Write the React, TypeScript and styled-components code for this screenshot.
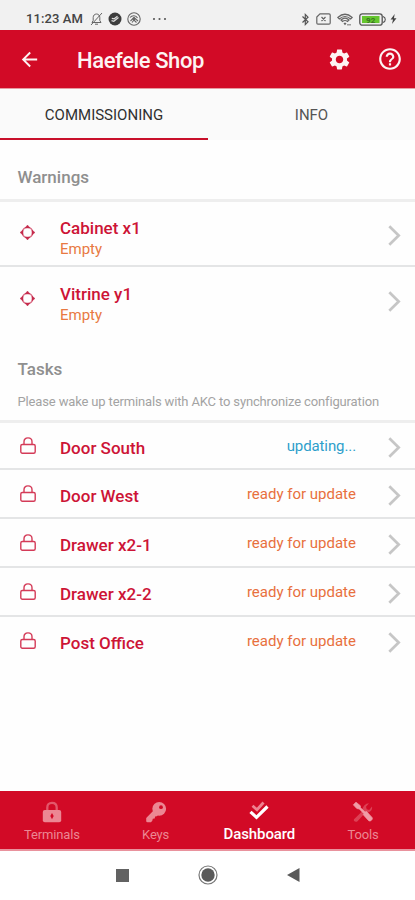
import React from "react";
import styled, { createGlobalStyle } from "styled-components";
import { MdArrowBack, MdSettings, MdHelpOutline } from "react-icons/md";

const RED = "#d20a26";
const PINK = "#ec8793";

const GlobalStyle = createGlobalStyle`
  * { box-sizing: border-box; }
  body { margin: 0; background: #fff; font-family: Roboto, sans-serif; }
  svg { display: block; flex: none; }
`;

const Screen = styled.div`
  width: 415px;
  height: 900px;
  display: flex;
  flex-direction: column;
  background: #fefefe;
  overflow: hidden;
`;

const StatusBar = styled.div`
  height: 30px;
  flex: none;
  display: flex;
  align-items: center;
  padding: 8px 18px 0 26px;
  background: #f1f1f1;
  color: #444;
`;

const Clock = styled.span`
  width: 64px;
  font-size: 13px;
  font-weight: 500;
  line-height: 16px;
  letter-spacing: 0.1px;
  white-space: nowrap;
`;

const StatusGroup = styled.div<{ $gap: number; $end?: boolean }>`
  display: flex;
  align-items: center;
  gap: ${(p) => p.$gap}px;
  margin-left: ${(p) => (p.$end ? "auto" : "0")};
`;

const DotsSlot = styled.div`
  margin-left: 6px;
`;

const BoltSlot = styled.div`
  margin-left: -2px;
`;

const AppBar = styled.header`
  height: 59px;
  flex: none;
  display: flex;
  align-items: center;
  padding: 0 12px 0 18px;
  background: ${RED};
  color: #fdf3f3;
  border-bottom: 1px solid #e79aa2;
`;

const Title = styled.h1`
  flex: 1;
  margin: 3px 0 0 36px;
  font-size: 22px;
  font-weight: 500;
  line-height: 28px;
  letter-spacing: -0.4px;
`;

const Actions = styled.div`
  display: flex;
  align-items: center;
  gap: 25px;
`;

const Tabs = styled.div`
  height: 51px;
  flex: none;
  display: flex;
  background: #fafafa;
`;

const Tab = styled.div<{ $active?: boolean }>`
  width: ${(p) => (p.$active ? 208 : 207)}px;
  height: 51px;
  padding-top: 16px;
  text-align: center;
  font-size: 15px;
  line-height: 20px;
  font-weight: 400;
  color: ${(p) => (p.$active ? "#303030" : "#555")};
  border-bottom: 2px solid ${(p) => (p.$active ? "#c8102a" : "#fafafa")};
`;

const Content = styled.main`
  flex: 1;
  min-height: 0;
`;

const SectionHead = styled.div<{ $height: number; $top: number }>`
  height: ${(p) => p.$height}px;
  padding: ${(p) => p.$top}px 18px 0 17.5px;
  border-bottom: 3px solid #eee;
`;

const SectionTitle = styled.h2`
  margin: 0;
  font-size: 17px;
  line-height: 20px;
  font-weight: 500;
  color: #8f8f8f;
`;

const SectionHint = styled.p`
  margin: 14px 0 0;
  font-size: 13px;
  line-height: 18px;
  letter-spacing: -0.145px;
  color: #a3a3a3;
  white-space: nowrap;
`;

const Row = styled.div<{ $height: number; $last?: boolean }>`
  height: ${(p) => p.$height}px;
  display: flex;
  align-items: center;
  padding: 0 14px 0 20px;
  border-bottom: 2px solid ${(p) => (p.$last ? "transparent" : "#e4e5e6")};
`;

const RowIcon = styled.div<{ $lift: number }>`
  width: 40px;
  padding-bottom: ${(p) => p.$lift}px;
`;

const RowText = styled.div<{ $top: number }>`
  flex: 1;
  padding-top: ${(p) => p.$top}px;
`;

const RowName = styled.div`
  font-size: 17px;
  line-height: 22px;
  font-weight: 500;
  color: #cd1436;
`;

const RowNote = styled.div`
  font-size: 15px;
  line-height: 21px;
  color: #e87942;
`;

const RowStatus = styled.div<{ $busy?: boolean }>`
  margin-right: 32px;
  padding-top: 1px;
  font-size: 15px;
  line-height: 20px;
  letter-spacing: ${(p) => (p.$busy ? "-0.1px" : "0")};
  color: ${(p) => (p.$busy ? "#2e9fcb" : "#e8703d")};
`;

const ChevronSlot = styled.div`
  padding-top: 3px;
`;

const BottomNav = styled.nav`
  height: 60px;
  flex: none;
  display: flex;
  background: ${RED};
  border-bottom: 2px solid #e9929d;
`;

const NavItem = styled.div<{ $active?: boolean }>`
  flex: 1;
  display: flex;
  flex-direction: column;
  align-items: center;
  padding-top: 10px;
  gap: ${(p) => (p.$active ? 1 : 2)}px;
  color: ${(p) => (p.$active ? "#fff" : PINK)};
  font-size: ${(p) => (p.$active ? 15 : 13)}px;
  font-weight: ${(p) => (p.$active ? 500 : 400)};
  letter-spacing: ${(p) => (p.$active ? "-0.1px" : "-0.15px")};
  line-height: 20px;
`;

const SystemNav = styled.div`
  height: 49px;
  flex: none;
  display: flex;
  align-items: center;
  justify-content: center;
  gap: 69px;
  padding-bottom: 1px;
  background: #fff;
`;

const BellOff = () => (
  <svg width="13" height="14" viewBox="0 0 13 14" fill="none" stroke="#666" strokeWidth="1">
    <path d="M2 10.5h9L9.8 8.5V5.5C9.8 3.5 8.5 2 6.5 2S3.2 3.5 3.2 5.5v3zM5 12.2h3M1 13L12 1" />
  </svg>
);

const CheckBadge = () => (
  <svg width="14" height="14" viewBox="0 0 14 14">
    <circle cx="7" cy="7" r="6.5" fill="#3d3d3d" />
    <path d="M3.5 8.7l2.300.6 4.700-3.800M3.800 6.300l2.400.5L9.500 4.200" fill="none" stroke="#ddd" strokeWidth="1.200" />
  </svg>
);

const AppBadge = () => (
  <svg width="14" height="14" viewBox="0 0 14 14" fill="none" stroke="#666" strokeWidth="1.1">
    <circle cx="7" cy="7" r="6.2" />
    <path d="M3 5.5C5 3 9 3 10.5 6M3.5 9L7 5.5l4 3.500M5 10.5L7 8l2.5 2.500" />
    <circle cx="7" cy="6.8" r="1" fill="#666" />
  </svg>
);

const Dots = () => (
  <svg width="15" height="4" viewBox="0 0 15 4" fill="#555">
    <circle cx="2" cy="2" r="1.05" />
    <circle cx="7.5" cy="2" r="1.05" />
    <circle cx="13" cy="2" r="1.05" />
  </svg>
);

const Bluetooth = () => (
  <svg width="9" height="13" viewBox="0 0 9 13" fill="none" stroke="#555" strokeWidth="1.2">
    <path d="M1.5 3.5L7 8.8l-2.700 2.700v-10L7 4.200 1.500 9.500" />
  </svg>
);

const SimOff = () => (
  <svg width="15" height="12" viewBox="0 0 15 12" fill="none" stroke="#666" strokeWidth="1.2">
    <path d="M4 .8h9q1.200 0 1.200 1.200v8q0 1.200-1.200 1.200H2Q.8 11.200.8 10V4zM5.500 4l4 4M9.500 4l-4 4" />
  </svg>
);

const Wifi = () => (
  <svg width="16" height="13" viewBox="0 0 16 13" fill="none" stroke="#666" strokeWidth="1.2">
    <path d="M.8 4.500Q8-2 15.200 4.500L13.700 6Q8 1 2.300 6zM4 7Q8 3.300 12 7L10.500 8.500Q8 6.500 5.500 8.500z" />
    <path d="M7 10l1 1.200L9 10M11 11v1.500M13 11v1.500" />
  </svg>
);

const Battery = () => (
  <svg width="27" height="13" viewBox="0 0 27 13">
    <rect x=".8" y=".8" width="22.4" height="11.4" rx="2.5" fill="#eee" stroke="#555" strokeWidth="1.3" />
    <path d="M24 3.500q2.300.8 2.300 3t-2.300 3" fill="none" stroke="#555" strokeWidth="1.1" />
    <rect x="3" y="3" width="17.5" height="7" fill="#65c62e" />
    <text x="11.7" y="9.5" fontFamily="Roboto" fontSize="8" fontWeight="700" textAnchor="middle" fill="#397620">
      92
    </text>
  </svg>
);

const Bolt = () => (
  <svg width="7" height="10" viewBox="0 0 7 11" fill="#444">
    <path d="M4.800 0L.3 6H3L1.800 11 6.800 4.600H4z" />
  </svg>
);

const Target = () => (
  <svg width="15" height="15" viewBox="0 0 15 15">
    <circle cx="7.5" cy="7.5" r="5.2" fill="none" stroke="#dc7189" strokeWidth="1.5" />
    <path
      d="M7.500 0L10 3H5zM7.500 15L10 12H5zM0 7.500L3 5v5zM15 7.500L12 5v5z"
      fill="#c52a4b"
      stroke="#c52a4b"
      strokeWidth=".4"
    />
  </svg>
);

const Padlock = () => (
  <svg width="16" height="17" viewBox="0 0 16 17" fill="none" stroke="#d43b58" strokeWidth="1.4">
    <rect x=".8" y="7.5" width="14.4" height="8.7" rx="1.5" />
    <path d="M4 7.500V4.800C4 2.300 5.500.9 8 .9s4 1.400 4 3.900v2.700" />
  </svg>
);

const Chevron = () => (
  <ChevronSlot>
    <svg width="13" height="21" viewBox="0 0 13 21" fill="none" stroke="#c6c6c6" strokeWidth="2.7">
      <path d="M1.300 1.300L10.700 10.500 1.300 19.700" />
    </svg>
  </ChevronSlot>
);

const LockSolid = () => (
  <svg width="20" height="22" viewBox="0 0 20 22">
    <path d="M5.300 10V6.500C5.300 3.500 7 1.800 10 1.800s4.700 1.700 4.700 4.700V10" fill="none" stroke="#e3576a" strokeWidth="2.3" />
    <rect x=".8" y="9" width="18.4" height="12.3" rx="2" fill={PINK} />
    <path d="M10 12l1.700 3-1.700 3.300L8.300 15z" fill={RED} />
  </svg>
);

const KeySolid = () => (
  <svg width="22" height="22" viewBox="0 0 22 22">
    <circle cx="14.2" cy="7.8" r="6.9" fill={PINK} />
    <path d="M9.500 8.500l4.500 4.500-2.200 2.200-1.700.3-.4 1.900-1.900.4-.5 1.900-1.300 1.600H2.500q-1.300 0-1.300-1.300v-3z" fill={PINK} />
    <circle cx="16" cy="6.2" r="1.9" fill={RED} />
  </svg>
);

const DoubleCheck = () => (
  <svg width="20" height="22" viewBox="0 0 20 22" fill="none">
    <path d="M3.500 4.700l4.500 4L14.500 1.500" stroke="#ee8290" strokeWidth="2.8" />
    <path d="M1.500 10.800l6 5.600L18.500 5.500" stroke="#fff" strokeWidth="3.2" />
  </svg>
);

const Tools = () => (
  <svg width="22" height="22" viewBox="0 0 22 22">
    <path
      d="M2 18.300l8-7.800c-.5-2 1-5.500 4.500-7.700l2.500-.5-3 3.500.7 2.500 2.500.7L20 5.500c.8 4-2.500 6.500-6.500 6l-8 8.700c-1.800 1.400-4.500-.3-3.500-1.900z"
      fill="#dd4155"
    />
    <path
      d="M1.300 3.800L4 1.200l4.300 3.500.2 2L13 11l1.500-.5 5.500 5.900c1.300 1.800-1.500 4.500-3.300 3.300l-5.400-5.900.5-1.300L7.300 8l-2.500-.5z"
      fill="#f09ca6"
      stroke="#f09ca6"
      strokeWidth=".7"
    />
  </svg>
);

const Recents = () => (
  <svg width="13" height="13" viewBox="0 0 13 13">
    <rect width="13" height="13" fill="#626262" />
  </svg>
);

const Home = () => (
  <svg width="20" height="20" viewBox="0 0 20 20">
    <circle cx="10" cy="10" r="9" fill="none" stroke="#777" strokeWidth="1.2" />
    <circle cx="10" cy="10" r="6.7" fill="#595959" />
  </svg>
);

const Back = () => (
  <svg width="13" height="14" viewBox="0 0 13 14">
    <path d="M0 7L12.500 0v14z" fill="#595959" />
  </svg>
);

const warnings = ["Cabinet x1", "Vitrine y1"];

const tasks = [
  { name: "Door South", status: "updating...", busy: true },
  { name: "Door West", status: "ready for update" },
  { name: "Drawer x2-1", status: "ready for update" },
  { name: "Drawer x2-2", status: "ready for update" },
  { name: "Post Office", status: "ready for update" },
];

export default function App() {
  return (
    <Screen>
      <GlobalStyle />
      <StatusBar>
        <Clock>11:23 AM</Clock>
        <StatusGroup $gap={5}>
          <BellOff />
          <CheckBadge />
          <AppBadge />
          <DotsSlot>
            <Dots />
          </DotsSlot>
        </StatusGroup>
        <StatusGroup $gap={6} $end>
          <Bluetooth />
          <SimOff />
          <Wifi />
          <Battery />
          <BoltSlot>
            <Bolt />
          </BoltSlot>
        </StatusGroup>
      </StatusBar>
      <AppBar>
        <MdArrowBack size={23} />
        <Title>Haefele Shop</Title>
        <Actions>
          <MdSettings size={25} />
          <MdHelpOutline size={26} />
        </Actions>
      </AppBar>
      <Tabs>
        <Tab $active>COMMISSIONING</Tab>
        <Tab>INFO</Tab>
      </Tabs>
      <Content>
        <SectionHead $height={62} $top={27}>
          <SectionTitle>Warnings</SectionTitle>
        </SectionHead>
        {warnings.map((name, i) => (
          <Row key={name} $height={i === 0 ? 65 : 67} $last={i === warnings.length - 1}>
            <RowIcon $lift={2}>
              <Target />
            </RowIcon>
            <RowText $top={9}>
              <RowName>{name}</RowName>
              <RowNote>Empty</RowNote>
            </RowText>
            <Chevron />
          </Row>
        ))}
        <SectionHead $height={89} $top={25}>
          <SectionTitle>Tasks</SectionTitle>
          <SectionHint>Please wake up terminals with AKC to synchronize configuration</SectionHint>
        </SectionHead>
        {tasks.map((task, i) => (
          <Row key={task.name} $height={i === 0 ? 47 : 49} $last={i === tasks.length - 1}>
            <RowIcon $lift={1}>
              <Padlock />
            </RowIcon>
            <RowText $top={5}>
              <RowName>{task.name}</RowName>
            </RowText>
            <RowStatus $busy={task.busy}>{task.status}</RowStatus>
            <Chevron />
          </Row>
        ))}
      </Content>
      <BottomNav>
        <NavItem>
          <LockSolid />
          Terminals
        </NavItem>
        <NavItem>
          <KeySolid />
          Keys
        </NavItem>
        <NavItem $active>
          <DoubleCheck />
          Dashboard
        </NavItem>
        <NavItem>
          <Tools />
          Tools
        </NavItem>
      </BottomNav>
      <SystemNav>
        <Recents />
        <Home />
        <Back />
      </SystemNav>
    </Screen>
  );
}
